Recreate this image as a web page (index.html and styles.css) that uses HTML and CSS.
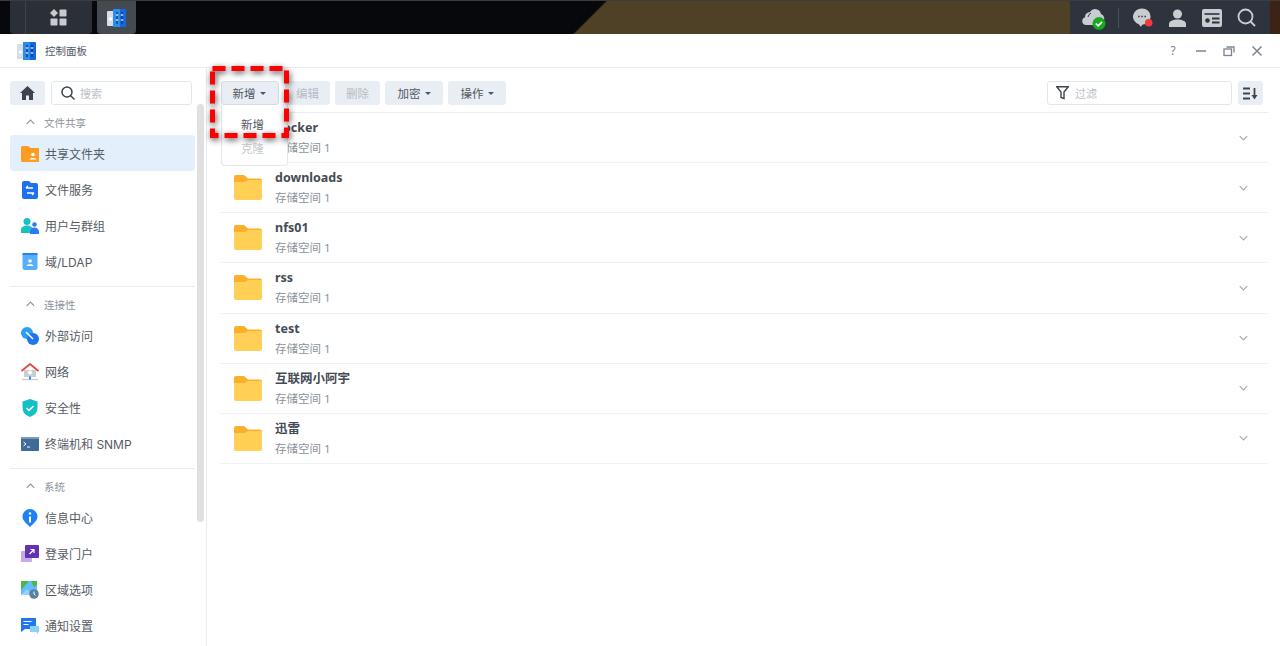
FILE: index.html
```html
<!DOCTYPE html>
<html lang="zh">
<head>
    <meta charset="UTF-8">
    <meta name="viewport" content="width=device-width, initial-scale=1.0">
    <title>控制面板</title>
    <link rel="stylesheet" href="styles.css">
</head>
<body>
    <svg class="sprites" width="0" height="0">
        <symbol id="folder" viewBox="0 0 28 25">
            <path d="M0 2a2 2 0 0 1 2-2h8l4 3.5h12a2 2 0 0 1 2 2V8H0z" fill="#fbb02b"/>
            <path d="M0 7h11l3-2h14v18a2 2 0 0 1-2 2H2a2 2 0 0 1-2-2z" fill="#ffcf56"/>
        </symbol>
        <symbol id="panel" viewBox="0 0 19 18">
            <rect x="0" y="2" width="7" height="15" rx="1" fill="#d8dee8"/>
            <circle cx="3.5" cy="10" r="1.8" fill="#fff"/>
            <rect x="6" y="0" width="13" height="18" rx="1" fill="#1467de"/>
            <rect x="6" y="0" width="7" height="18" fill="#2b8cf2"/>
            <path d="M10 3v12M15 3v12" stroke="#0d2f6e" stroke-width="1.2"/>
            <path d="M8.8 6h2.4M13.8 11h2.4M8.8 11h2.4M13.8 6h2.4" stroke="#bfe0ff" stroke-width="1.4"/>
        </symbol>
        <symbol id="chev-down" viewBox="0 0 12 8">
            <path d="M1 1.5l5 5 5-5" fill="none" stroke="#a3a9b2" stroke-width="1.5"/>
        </symbol>
        <symbol id="chev-up" viewBox="0 0 12 8">
            <path d="M1 6.5l5-5 5 5" fill="none" stroke="#8d939c" stroke-width="1.5"/>
        </symbol>
    </svg>

    <div class="topbar">
        <div class="task-group">
            <div class="task-gap"></div>
            <div class="task-main">
                <svg width="17" height="17" viewBox="0 0 17 17" fill="#c9cbce">
                    <path d="M4 0l4 4-4 4-4-4z"/>
                    <rect x="9.5" y="0.5" width="7" height="7" rx="0.8"/>
                    <rect x="0.5" y="9.5" width="7" height="7" rx="0.8"/>
                    <rect x="9.5" y="9.5" width="7" height="7" rx="0.8"/>
                </svg>
            </div>
        </div>
        <div class="task-app"><svg width="19" height="18"><use href="#panel"/></svg></div>
        <div class="tray">
            <svg width="24" height="24" viewBox="0 0 24 24">
                <path d="M4 19a4 4 0 0 1-1-7.8A5 5 0 0 1 8 6a6 6 0 0 1 11 2 5 5 0 0 1 2 8l-4 3z" fill="#c9ccd0"/>
                <path d="M9 7a6 6 0 0 0-3 4" fill="none" stroke="#2e343d"/>
                <circle cx="17" cy="17.500" r="6.500" fill="#16a91f"/>
                <path d="M13.800 17.500l2.300 2.300 4-4" fill="none" stroke="#fff" stroke-width="1.700"/>
            </svg>
            <div class="tray-line"></div>
            <svg class="tray-chat" width="20" height="20" viewBox="0 0 21 20">
                <path d="M9.500 0a9 8.500 0 0 1 0 17l-1 2.500-2.500-3A9 8.500 0 0 1 9.500 0z" fill="#c9ccd0"/>
                <path d="M5.500 8.500h1.500M8.700 8.500h1.500M12 8.500h1.500" stroke="#2e343d" stroke-width="1.600"/>
                <circle cx="16.500" cy="15" r="4" fill="#f5393c"/>
            </svg>
            <svg width="19" height="18" viewBox="0 0 19 18" fill="#c9ccd0">
                <circle cx="9.500" cy="5" r="4.500"/>
                <path d="M1 18v-3c0-3 4-4.500 8.500-4.500S18 12 18 15v3z"/>
            </svg>
            <svg width="20" height="18" viewBox="0 0 20 18">
                <rect width="20" height="18" rx="2" fill="#c9ccd0"/>
                <path d="M2.500 5h15" stroke="#2e343d" stroke-width="1.600"/>
                <circle cx="5.500" cy="11.500" r="2.300" fill="#2e343d"/>
                <path d="M10 9.500h7.500M10 13.500h7.500" stroke="#2e343d" stroke-width="1.800"/>
            </svg>
            <svg width="19" height="19" viewBox="0 0 19 19" fill="none" stroke="#c9ccd0" stroke-width="1.800">
                <circle cx="8.500" cy="8.500" r="7"/>
                <path d="M13.500 13.500l4.500 4.500"/>
            </svg>
        </div>
        <div class="topbar-end"></div>
    </div>

    <div class="window">
        <header class="win-head">
            <svg class="win-logo" width="19" height="18"><use href="#panel"/></svg>
            <span class="win-title">控制面板</span>
            <div class="win-btns">
                <span class="win-help">?</span>
                <svg width="12" height="12" viewBox="0 0 12 12"><path d="M1 6h10" stroke="#7d838c" stroke-width="1.500"/></svg>
                <svg width="12" height="12" viewBox="0 0 12 12" fill="none" stroke="#7d838c" stroke-width="1.300"><rect x="1" y="4" width="7.500" height="6.500"/><path d="M3.500 2h7.500v5.500"/></svg>
                <svg width="12" height="12" viewBox="0 0 12 12"><path d="M1.500 1.500l9 9M10.500 1.500l-9 9" stroke="#7d838c" stroke-width="1.500"/></svg>
            </div>
        </header>

        <div class="win-body">
            <aside class="sidebar">
                <div class="side-top">
                    <button class="home-btn">
                        <svg width="15" height="14" viewBox="0 0 15 14" fill="#3e444c"><path d="M7.500 0L15 7h-2v7H9V9.500H6V14H2V7H0z"/></svg>
                    </button>
                    <div class="side-search">
                        <svg width="14" height="14" viewBox="0 0 14 14" fill="none" stroke="#3e444c" stroke-width="1.500"><circle cx="6" cy="6" r="5"/><path d="M9.500 9.500l4 4"/></svg>
                        <span>搜索</span>
                    </div>
                </div>

                <div class="group-head"><svg width="9" height="6"><use href="#chev-up"/></svg>文件共享</div>
                <div class="nav-row selected">
                    <svg width="18" height="16" viewBox="0 0 18 16">
                        <path d="M0 1.500A1.500 1.500 0 0 1 1.500 0H7l2.500 2H18v14H1.500A1.500 1.500 0 0 1 0 14.500z" fill="#fb9d22"/>
                        <circle cx="12" cy="8.500" r="1.800" fill="#fff"/><path d="M8.500 13.500c0-2 7-2 7 0z" fill="#fff"/>
                    </svg>
                    共享文件夹
                </div>
                <div class="nav-row">
                    <svg width="18" height="18" viewBox="0 0 18 18">
                        <path d="M1 2a2 2 0 0 1 2-2h5l2 2h5a2 2 0 0 1 2 2v12a2 2 0 0 1-2 2H3a2 2 0 0 1-2-2z" fill="#1f6fee"/>
                        <path d="M5 7h7M5 7l2-2M13 12H6M13 12l-2 2" fill="none" stroke="#fff" stroke-width="1.300"/>
                    </svg>
                    文件服务
                </div>
                <div class="nav-row">
                    <svg width="18" height="16" viewBox="0 0 18 16">
                        <circle cx="6" cy="3.500" r="3.500" fill="#19c1c1"/><path d="M0 15v-3c0-3 3-4.500 6-4.500s6 1.500 6 4.500v3z" fill="#19c1c1"/>
                        <circle cx="13.500" cy="6.500" r="2.300" fill="#2b7cf0"/><path d="M9 16v-2c0-3 2-4.500 4.500-4.500S18 11 18 14v2z" fill="#2b7cf0"/>
                    </svg>
                    用户与群组
                </div>
                <div class="nav-row">
                    <svg width="18" height="18" viewBox="0 0 18 18">
                        <rect x="1.500" y="0" width="15" height="17" rx="2" fill="#57aefb"/>
                        <rect x="1.500" y="0" width="15" height="2" fill="#2d7fee"/>
                        <circle cx="9" cy="8" r="1.800" fill="#fff"/><path d="M5.500 13c0-2.500 7-2.500 7 0z" fill="#fff"/>
                    </svg>
                    域/LDAP
                </div>
                <div class="side-line"></div>

                <div class="group-head"><svg width="9" height="6"><use href="#chev-up"/></svg>连接性</div>
                <div class="nav-row">
                    <svg width="18" height="18" viewBox="0 0 18 18">
                        <circle cx="6" cy="6" r="6" fill="#29a0f2"/><circle cx="12" cy="12" r="6" fill="#2075ec"/>
                        <path d="M5 5l7 7" stroke="#fff" stroke-width="1.500"/>
                    </svg>
                    外部访问
                </div>
                <div class="nav-row">
                    <svg width="18" height="18" viewBox="0 0 18 18">
                        <path d="M3 7h12v7H3z" fill="#c9ced4"/><circle cx="9" cy="9.500" r="2" fill="#fff"/>
                        <path d="M0.500 8L9 1l8.500 7" fill="none" stroke="#e2473f" stroke-width="1.800"/>
                        <path d="M1 16.500h16" stroke="#c9ced4" stroke-width="1.300"/>
                        <path d="M9 13.500v3" stroke="#2b8cf2" stroke-width="2"/>
                    </svg>
                    网络
                </div>
                <div class="nav-row">
                    <svg width="18" height="18" viewBox="0 0 18 18">
                        <path d="M9 0l7.500 2.500V9c0 4.500-3.500 7.500-7.500 9-4-1.500-7.500-4.500-7.500-9V2.500z" fill="#13c0c6"/>
                        <path d="M5.500 9l2.500 2.500 4.500-4.500" fill="none" stroke="#fff" stroke-width="1.500"/>
                    </svg>
                    安全性
                </div>
                <div class="nav-row">
                    <svg width="18" height="14" viewBox="0 0 18 14">
                        <rect width="18" height="14" rx="1" fill="#3f6b98"/>
                        <rect width="18" height="2" fill="#7f9ab6"/>
                        <path d="M2.500 5l2.500 2-2.500 2M6 10h3" fill="none" stroke="#fff" stroke-width="1"/>
                    </svg>
                    终端机和 SNMP
                </div>
                <div class="side-line"></div>

                <div class="group-head"><svg width="9" height="6"><use href="#chev-up"/></svg>系统</div>
                <div class="nav-row">
                    <svg width="18" height="18" viewBox="0 0 18 18">
                        <path d="M9 0a7.500 7.500 0 0 1 7.500 7.500c0 4-3.500 6.500-7.500 10.500-4-4-7.500-6.500-7.500-10.500A7.500 7.500 0 0 1 9 0z" fill="#1f82f2"/>
                        <path d="M9 7.500v6" stroke="#fff" stroke-width="2"/><circle cx="9" cy="4.500" r="1.200" fill="#fff"/>
                    </svg>
                    信息中心
                </div>
                <div class="nav-row">
                    <svg width="18" height="17" viewBox="0 0 18 17">
                        <rect x="0" y="6" width="11" height="11" rx="1" fill="#c6a8ec"/>
                        <rect x="4" y="0" width="14" height="13" rx="1" fill="#6232b0"/>
                        <path d="M8.500 9l4.500-4.500M9.500 4.500h3.500V8" fill="none" stroke="#fff" stroke-width="1.200"/>
                    </svg>
                    登录门户
                </div>
                <div class="nav-row">
                    <svg width="18" height="18" viewBox="0 0 18 18">
                        <rect y="0" width="16" height="14" fill="#63bffb"/>
                        <path d="M0 0h8L0 9z" fill="#4eb648"/><path d="M10 0h6v4l-3 2z" fill="#4eb648"/><path d="M0 14l6-6 5 6z" fill="#9ad0fb"/>
                        <circle cx="13" cy="13" r="4.800" fill="#5b7fa6"/><path d="M13 10.500V13l1.500 1.500" fill="none" stroke="#fff"/>
                    </svg>
                    区域选项
                </div>
                <div class="nav-row">
                    <svg width="18" height="16" viewBox="0 0 18 16">
                        <path d="M0 0h15v11H4l-4 3z" fill="#1f78f0"/>
                        <path d="M2.500 3.500h8M2.500 6.500h5" stroke="#fff" stroke-width="1.200"/>
                        <path d="M9 8h9v6h-1v2l-2-2H9z" fill="#8ed0fb"/>
                    </svg>
                    通知设置
                </div>
                <div class="side-scroll"></div>
            </aside>

            <main class="main">
                <div class="toolbar">
                    <div class="add-wrap">
                        <button class="tool-btn open">新增<i class="caret"></i></button>
                        <div class="menu">
                            <div class="menu-item">新增</div>
                            <div class="menu-item off">克隆</div>
                        </div>
                        <svg class="mark" width="80" height="73" viewBox="0 0 80 73">
                            <rect x="2.500" y="2.500" width="74" height="67" fill="none" stroke="#f00" stroke-width="5" stroke-dasharray="13 6"/>
                        </svg>
                    </div>
                    <button class="tool-btn off">编辑</button>
                    <button class="tool-btn off">删除</button>
                    <button class="tool-btn wide">加密<i class="caret"></i></button>
                    <button class="tool-btn wide">操作<i class="caret"></i></button>
                    <div class="filter">
                        <svg width="13" height="14" viewBox="0 0 13 14" fill="none" stroke="#3e444c" stroke-width="1.400"><path d="M0.700 0.800h11.600L8 6v6.500L5 11.500V6z"/></svg>
                        <span>过滤</span>
                    </div>
                    <button class="sort-btn">
                        <svg width="15" height="13" viewBox="0 0 15 13"><path d="M0 1.500h7M0 6.500h7M0 11.500h7" stroke="#3e444c" stroke-width="1.800"/><path d="M11.500 1v8" stroke="#3e444c" stroke-width="1.800"/><path d="M8.500 8h6l-3 4.500z" fill="#3e444c"/></svg>
                    </button>
                </div>

                <div class="share-row">
                    <svg class="folder" width="28" height="25"><use href="#folder"/></svg>
                    <div class="share-text"><div class="share-name">docker</div><div class="share-sub">存储空间 1</div></div>
                    <svg class="chev" width="9" height="6"><use href="#chev-down"/></svg>
                </div>
                <div class="share-row">
                    <svg class="folder" width="28" height="25"><use href="#folder"/></svg>
                    <div class="share-text"><div class="share-name">downloads</div><div class="share-sub">存储空间 1</div></div>
                    <svg class="chev" width="9" height="6"><use href="#chev-down"/></svg>
                </div>
                <div class="share-row">
                    <svg class="folder" width="28" height="25"><use href="#folder"/></svg>
                    <div class="share-text"><div class="share-name">nfs01</div><div class="share-sub">存储空间 1</div></div>
                    <svg class="chev" width="9" height="6"><use href="#chev-down"/></svg>
                </div>
                <div class="share-row">
                    <svg class="folder" width="28" height="25"><use href="#folder"/></svg>
                    <div class="share-text"><div class="share-name">rss</div><div class="share-sub">存储空间 1</div></div>
                    <svg class="chev" width="9" height="6"><use href="#chev-down"/></svg>
                </div>
                <div class="share-row">
                    <svg class="folder" width="28" height="25"><use href="#folder"/></svg>
                    <div class="share-text"><div class="share-name">test</div><div class="share-sub">存储空间 1</div></div>
                    <svg class="chev" width="9" height="6"><use href="#chev-down"/></svg>
                </div>
                <div class="share-row">
                    <svg class="folder" width="28" height="25"><use href="#folder"/></svg>
                    <div class="share-text"><div class="share-name">互联网小阿宇</div><div class="share-sub">存储空间 1</div></div>
                    <svg class="chev" width="9" height="6"><use href="#chev-down"/></svg>
                </div>
                <div class="share-row">
                    <svg class="folder" width="28" height="25"><use href="#folder"/></svg>
                    <div class="share-text"><div class="share-name">迅雷</div><div class="share-sub">存储空间 1</div></div>
                    <svg class="chev" width="9" height="6"><use href="#chev-down"/></svg>
                </div>
            </main>
        </div>
    </div>
</body>
</html>
```

FILE: styles.css
```css
* {
    box-sizing: border-box;
}

html, body {
    margin: 0;
    height: 100%;
    overflow: hidden;
}

body {
    display: flex;
    flex-direction: column;
    font-family: "Noto Sans", "Noto Sans CJK SC", sans-serif;
    color: #555b64;
    background: #fff;
}

.sprites {
    position: absolute;
}

svg {
    flex-shrink: 0;
    display: block;
}

/* top bar */
.topbar {
    height: 34px;
    flex-shrink: 0;
    display: flex;
    align-items: stretch;
    padding-left: 10px;
    background: linear-gradient(135deg, #07080b 46.1%, #4f4126 46.3%);
    border-top: 1px solid #3c3c3c;
}

.task-group {
    width: 82px;
    display: flex;
    background: #2b3038;
    border-radius: 0 0 4px 4px;
}

.task-gap {
    width: 16px;
    border-right: 1px solid #3f444b;
}

.task-main {
    flex: 1;
    display: flex;
    align-items: center;
    justify-content: center;
    padding-right: 2px;
}

.task-app {
    width: 39px;
    margin-left: 5px;
    display: flex;
    align-items: center;
    justify-content: center;
    background: #454a51;
    border-radius: 0 0 4px 4px;
}

.tray {
    margin-left: auto;
    width: 200px;
    display: flex;
    align-items: center;
    padding-left: 12px;
    gap: 15px;
    background: #2e343d;
}

.tray-line {
    width: 1px;
    height: 20px;
    background: #4a5059;
    margin-left: -3px;
    margin-right: -1px;
}

.topbar-end {
    width: 10px;
    background: #3d2314;
}

/* window */
.window {
    flex: 1;
    min-height: 0;
    display: flex;
    flex-direction: column;
    background: #fff;
    border-radius: 3px 3px 0 0;
}

.win-head {
    height: 34px;
    flex-shrink: 0;
    display: flex;
    align-items: center;
    padding: 0 17px;
    border-bottom: 1px solid #e8edf3;
}

.win-title {
    margin-left: 9px;
    font-size: 10.5px;
    color: #50565f;
}

.win-btns {
    margin-left: auto;
    display: flex;
    align-items: center;
    gap: 16px;
}

.win-help {
    font-size: 12px;
    color: #7d838c;
    width: 12px;
    text-align: center;
}

.win-body {
    flex: 1;
    min-height: 0;
    display: flex;
}

/* sidebar */
.sidebar {
    position: relative;
    width: 207px;
    flex-shrink: 0;
    padding: 13px 11px 0 10px;
    border-right: 1px solid #e8edf3;
    overflow: hidden;
}

.side-top {
    display: flex;
    gap: 6px;
    height: 24px;
    margin-right: 3px;
}

.home-btn {
    width: 35px;
    height: 24px;
    padding: 0;
    border: 0;
    border-radius: 3px;
    background: #e9eef5;
    display: flex;
    align-items: center;
    justify-content: center;
}

.side-search {
    flex: 1;
    display: flex;
    align-items: center;
    gap: 5px;
    padding-left: 9px;
    border: 1px solid #dfe7f0;
    border-radius: 3px;
    font-size: 11px;
    color: #bcc1c8;
}

.group-head {
    height: 30px;
    display: flex;
    align-items: center;
    gap: 9px;
    padding: 4px 0 0 16px;
    font-size: 10.5px;
    color: #8d939c;
}

.nav-row {
    height: 36px;
    display: flex;
    align-items: center;
    gap: 6px;
    padding: 1px 0 0 11px;
    font-family: Inter, "Noto Sans CJK SC", sans-serif;
    font-size: 12px;
    color: #555b64;
    border-radius: 4px;
}

.nav-row.selected {
    background: #e3f0fb;
}

.side-line {
    height: 1px;
    margin-top: 7px;
    background: #e8edf3;
}

.side-scroll {
    position: absolute;
    left: 197px;
    top: 36px;
    width: 7px;
    height: 418px;
    border-radius: 4px;
    background: #e0e0e0;
}

/* main area */
.main {
    flex: 1;
    min-width: 0;
    padding: 0 12px 0 13px;
}

.toolbar {
    height: 45px;
    display: flex;
    align-items: center;
    gap: 5px;
    padding: 6px 5px 0 1px;
    border-bottom: 1px solid #e8edf3;
}

.tool-btn {
    height: 24px;
    min-width: 45px;
    padding: 0 11px;
    border: 0;
    border-radius: 3px;
    background: #e9eef5;
    font: inherit;
    font-size: 11.500px;
    color: #50565f;
    display: flex;
    align-items: center;
    justify-content: center;
    white-space: nowrap;
}

.tool-btn.off {
    color: #b6bbc2;
}

.tool-btn.wide {
    width: 58px;
}

.tool-btn.open {
    width: 58px;
    padding-right: 13px;
    border: 1px solid #d5dde7;
}

.caret {
    width: 0;
    height: 0;
    margin-left: 4px;
    border-left: 3px solid transparent;
    border-right: 3px solid transparent;
    border-top: 3px solid #50565f;
}

.add-wrap {
    position: relative;
    margin-right: 1px;
}

.menu {
    position: absolute;
    left: 0;
    top: 24px;
    width: 67px;
    height: 61px;
    padding: 7px 4px 0 0;
    background: #fff;
    border: 1px solid #e3e8ef;
    border-top: 0;
    border-radius: 0 0 4px 4px;
    z-index: 2;
}

.menu-item {
    height: 24px;
    display: flex;
    align-items: center;
    justify-content: center;
    font-size: 11.500px;
    color: #50565f;
}

.menu-item.off {
    color: #c4c8ce;
}

.mark {
    position: absolute;
    left: -11px;
    top: -15px;
    z-index: 3;
    filter: drop-shadow(1px 2px 3px rgba(0, 0, 0, 0.7));
}

.filter {
    margin-left: auto;
    margin-right: 1px;
    width: 185px;
    height: 24px;
    display: flex;
    align-items: center;
    gap: 6px;
    padding-left: 8px;
    border: 1px solid #dfe7f0;
    border-radius: 3px;
    font-size: 11px;
    color: #bcc1c8;
}

.sort-btn {
    width: 25px;
    height: 24px;
    padding: 0;
    border: 0;
    border-radius: 3px;
    background: #e9eef5;
    display: flex;
    align-items: center;
    justify-content: center;
}

/* share list */
.share-row {
    height: 50.150px;
    display: flex;
    align-items: center;
    padding-left: 14px;
    border-bottom: 1px solid #eef1f5;
}

.share-text {
    margin: 1px 0 0 13px;
    flex: 1;
    min-width: 0;
}

.share-name {
    font-size: 12.500px;
    font-weight: 700;
    line-height: 18px;
    color: #454b54;
}

.share-sub {
    font-size: 11.500px;
    line-height: 19px;
    color: #8b929c;
    margin-top: 1px;
}

.chev {
    margin-right: 20.500px;
}
```
